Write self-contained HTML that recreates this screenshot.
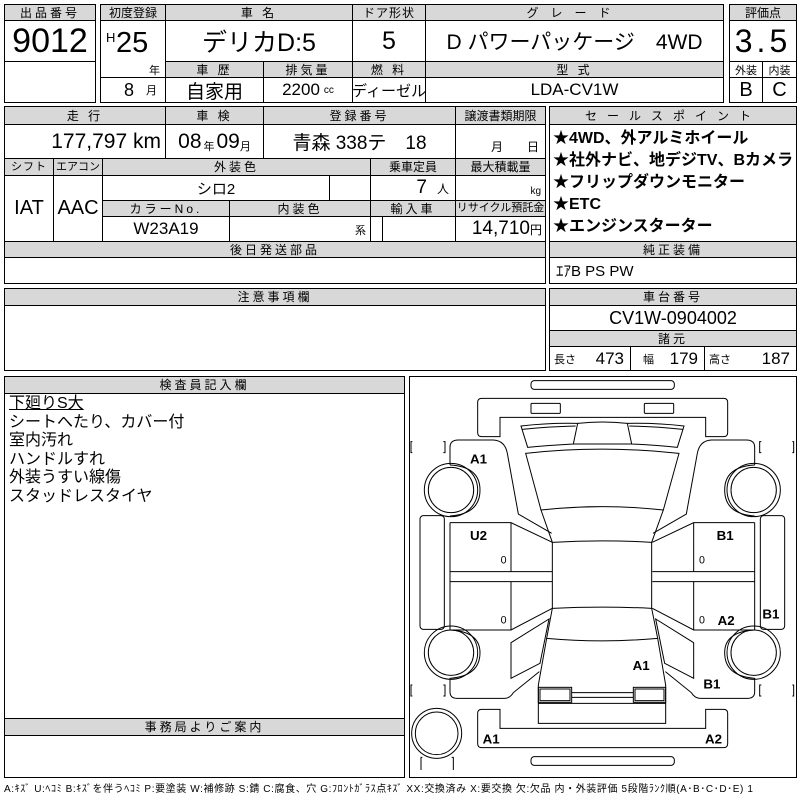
<!DOCTYPE html>
<html><head><meta charset="utf-8">
<style>
*{margin:0;padding:0;box-sizing:border-box}
body{width:800px;height:800px;background:#fff;position:relative;overflow:hidden;font-family:"Liberation Sans","Noto Sans CJK JP",sans-serif;color:#000}
.c{position:absolute;border:1px solid #000;display:flex;align-items:center;justify-content:center;white-space:nowrap;overflow:hidden}
.h{background:#d8d8d8;font-size:12px;letter-spacing:3px;line-height:1}
.v{font-size:19px}
.b{position:absolute;border:1px solid #000}
</style></head><body>
<div class="b" style="left:4px;top:4px;width:92px;height:99px"></div>
<div class="c h" style="left:4px;top:4px;width:92px;height:17px">出品番号</div>
<div class="c" style="left:4px;top:20px;width:92px;height:42px;font-size:34px">9012</div>

<div class="c h" style="left:100px;top:4px;width:66px;height:17px;letter-spacing:0">初度登録</div>
<div class="c h" style="left:165px;top:4px;width:188px;height:17px">車 名</div>
<div class="c h" style="left:352px;top:4px;width:74px;height:17px;letter-spacing:1px">ドア形状</div>
<div class="c h" style="left:425px;top:4px;width:299px;height:17px;letter-spacing:12px">グレード</div>
<div class="c" style="left:100px;top:20px;width:66px;height:58px"></div>
<div style="position:absolute;left:106px;top:30px;font-size:13px">H</div>
<div style="position:absolute;left:116px;top:29px;font-size:29px;line-height:1">25</div>
<div style="position:absolute;left:149px;top:62px;font-size:11px">年</div>
<div class="c" style="left:165px;top:20px;width:188px;height:42px;font-size:25px">デリカD:5</div>
<div class="c" style="left:352px;top:20px;width:74px;height:42px;font-size:25px">5</div>
<div class="c" style="left:425px;top:20px;width:299px;height:42px;font-size:21px">D パワーパッケージ　4WD</div>
<div class="c h" style="left:165px;top:61px;width:99px;height:17px">車 歴</div>
<div class="c h" style="left:263px;top:61px;width:90px;height:17px">排気量</div>
<div class="c h" style="left:352px;top:61px;width:74px;height:17px">燃 料</div>
<div class="c h" style="left:425px;top:61px;width:299px;height:17px">型 式</div>
<div class="c" style="left:100px;top:77px;width:66px;height:26px;font-size:18px;justify-content:flex-end;padding-right:8px">8 <span style="font-size:11px;margin-left:12px">月</span></div>
<div class="c v" style="left:165px;top:77px;width:99px;height:26px">自家用</div>
<div class="c v" style="left:263px;top:77px;width:90px;height:26px;font-size:17px">2200 <span style="font-size:10px;margin-left:4px">cc</span></div>
<div class="c v" style="left:352px;top:77px;width:74px;height:26px;font-size:15px">ディーゼル</div>
<div class="c v" style="left:425px;top:77px;width:299px;height:26px;font-size:17px">LDA-CV1W</div>

<div class="c h" style="left:729px;top:4px;width:68px;height:17px;letter-spacing:0">評価点</div>
<div class="c" style="left:729px;top:20px;width:68px;height:42px;font-size:32px;letter-spacing:4px">3.5</div>
<div class="c" style="left:729px;top:61px;width:34px;height:17px;font-size:11px">外装</div>
<div class="c" style="left:762px;top:61px;width:35px;height:17px;font-size:11px">内装</div>
<div class="c" style="left:729px;top:77px;width:34px;height:26px;font-size:20px">B</div>
<div class="c" style="left:762px;top:77px;width:35px;height:26px;font-size:20px">C</div>

<div class="c h" style="left:4px;top:106px;width:162px;height:19px">走 行</div>
<div class="c h" style="left:165px;top:106px;width:99px;height:19px">車 検</div>
<div class="c h" style="left:263px;top:106px;width:193px;height:19px">登録番号</div>
<div class="c h" style="left:455px;top:106px;width:91px;height:19px;letter-spacing:0">譲渡書類期限</div>
<div class="c v" style="left:4px;top:124px;width:162px;height:35px;justify-content:flex-end;padding-right:4px;font-size:21px">177,797 km</div>
<div class="c v" style="left:165px;top:124px;width:99px;height:35px;font-size:21px">08<span style="font-size:11px;margin:8px 2px 0">年</span>09<span style="font-size:11px;margin-top:8px">月</span></div>
<div class="c v" style="left:263px;top:124px;width:193px;height:35px">青森 338テ　18</div>
<div class="c" style="left:455px;top:124px;width:91px;height:35px;font-size:12px;align-items:flex-end;padding-bottom:3px;justify-content:flex-end;padding-right:6px">月　　日</div>
<div class="c h" style="left:4px;top:158px;width:50px;height:18px;letter-spacing:1px;font-size:11px">シフト</div>
<div class="c h" style="left:53px;top:158px;width:50px;height:18px;letter-spacing:0;font-size:11px">エアコン</div>
<div class="c h" style="left:102px;top:158px;width:269px;height:18px">外装色</div>
<div class="c h" style="left:370px;top:158px;width:86px;height:18px;letter-spacing:0">乗車定員</div>
<div class="c h" style="left:455px;top:158px;width:91px;height:18px;letter-spacing:0">最大積載量</div>
<div class="c v" style="left:4px;top:175px;width:50px;height:67px;font-size:20px">IAT</div>
<div class="c v" style="left:53px;top:175px;width:50px;height:67px;font-size:20px">AAC</div>
<div class="c" style="left:102px;top:175px;width:228px;height:26px;font-size:15px">シロ2</div>
<div class="c" style="left:329px;top:175px;width:42px;height:26px"></div>
<div class="c v" style="left:370px;top:175px;width:86px;height:26px;justify-content:flex-end;padding-right:6px">7 <span style="font-size:12px;margin-left:10px">人</span></div>
<div class="c" style="left:455px;top:175px;width:91px;height:26px;font-size:10px;justify-content:flex-end;align-items:flex-end;padding:0 4px 3px 0">kg</div>
<div class="c h" style="left:102px;top:200px;width:128px;height:17px">カラーNo.</div>
<div class="c h" style="left:229px;top:200px;width:142px;height:17px">内装色</div>
<div class="c h" style="left:370px;top:200px;width:86px;height:17px">輸入車</div>
<div class="c h" style="left:455px;top:200px;width:91px;height:17px;letter-spacing:0;font-size:11px">リサイクル預託金</div>
<div class="c" style="left:102px;top:216px;width:128px;height:26px;font-size:17px">W23A19</div>
<div class="c" style="left:229px;top:216px;width:142px;height:26px;font-size:11px;justify-content:flex-end;align-items:flex-end;padding:0 4px 3px 0">系</div>
<div class="c" style="left:370px;top:216px;width:13px;height:26px"></div>
<div class="c" style="left:382px;top:216px;width:74px;height:26px"></div>
<div class="c" style="left:455px;top:216px;width:91px;height:26px;font-size:19px;justify-content:flex-end;padding-right:3px">14,710<span style="font-size:12px">円</span></div>
<div class="c h" style="left:4px;top:241px;width:542px;height:17px">後日発送部品</div>
<div class="c" style="left:4px;top:257px;width:542px;height:27px"></div>

<div class="c h" style="left:549px;top:106px;width:248px;height:19px;letter-spacing:10px">セールスポイント</div>
<div class="c" style="left:549px;top:124px;width:248px;height:118px;display:block;font-size:16px;font-weight:bold;line-height:22px;padding:3px 0 0 3px">★4WD、外アルミホイール<br>★社外ナビ、地デジTV、Bカメラ<br>★フリップダウンモニター<br>★ETC<br>★エンジンスターター</div>
<div class="c h" style="left:549px;top:241px;width:248px;height:17px">純正装備</div>
<div class="c" style="left:549px;top:257px;width:248px;height:27px;justify-content:flex-start;padding-left:6px;font-size:15px">ｴｱB PS PW</div>

<div class="b" style="left:4px;top:288px;width:542px;height:83px"></div>
<div class="c h" style="left:4px;top:288px;width:542px;height:18px">注意事項欄</div>
<div class="c h" style="left:549px;top:288px;width:248px;height:18px">車台番号</div>
<div class="c" style="left:549px;top:305px;width:248px;height:26px;font-size:18px">CV1W-0904002</div>
<div class="c h" style="left:549px;top:330px;width:248px;height:17px">諸元</div>
<div class="c" style="left:549px;top:346px;width:82px;height:25px;font-size:17px;justify-content:space-between;padding:0 6px 0 4px"><span style="font-size:11px">長さ</span>473</div>
<div class="c" style="left:630px;top:346px;width:75px;height:25px;font-size:17px;justify-content:space-between;padding:0 6px 0 12px"><span style="font-size:11px">幅</span>179</div>
<div class="c" style="left:704px;top:346px;width:93px;height:25px;font-size:17px;justify-content:space-between;padding:0 6px 0 4px"><span style="font-size:11px">高さ</span>187</div>

<div class="b" style="left:4px;top:376px;width:401px;height:402px"></div>
<div class="c h" style="left:4px;top:376px;width:401px;height:18px">検査員記入欄</div>
<div style="position:absolute;left:9px;top:395px;font-size:16px;line-height:18.5px"><span style="text-decoration:underline">下廻りS大</span><br>シートへたり、カバー付<br>室内汚れ<br>ハンドルすれ<br>外装うすい線傷<br>スタッドレスタイヤ</div>
<div class="c h" style="left:4px;top:718px;width:401px;height:18px">事務局よりご案内</div>

<div class="b" style="left:409px;top:376px;width:388px;height:402px"></div>
<svg style="position:absolute;left:405px;top:370px" width="395" height="400" viewBox="0 0 1185 1200" fill="none" stroke="#000" stroke-width="3">
<g id="half">
<rect x="378" y="32" width="430" height="26" rx="10"/>
<path d="M285,200 L230,200 Q218,200 218,188 L218,97 Q218,85 230,85 L956,85 Q968,85 968,97 L968,188 Q968,200 956,200 L902,200 L902,142 L285,142 Z"/>
<rect x="378" y="100" width="88" height="30" rx="3"/>
<rect x="718" y="100" width="88" height="30" rx="3"/>
<path d="M348,168 Q430,158 518,160 L505,222 Q430,226 368,232 Z"/>
<path d="M352,178 Q430,170 512,168"/>
<path d="M837,168 Q755,158 667,160 L680,222 Q755,226 817,232 Z"/>
<path d="M833,178 Q755,170 673,168"/>
<path d="M505,222 L680,222"/>
<path d="M518,160 Q592,152 667,160"/>
<path d="M362,250 Q592,225 822,250 L775,420 Q592,400 408,420 Z"/>
<path d="M408,420 L442,517 Q592,508 740,517 L775,420"/>
<path d="M442,517 L442,715 Q592,708 740,715 L740,517"/>
<path d="M442,715 L425,805 Q592,820 758,805 L740,715"/>
<path d="M425,805 L400,945 L400,1060 L782,1060 L782,945 L758,805"/>
<rect x="400" y="952" width="100" height="45"/><rect x="405" y="957" width="90" height="35"/>
<rect x="685" y="952" width="97" height="45"/><rect x="690" y="957" width="87" height="35"/>
<path d="M500,968 L685,968 M500,982 L685,982 M400,1000 L782,1000"/>
<path d="M285,1018 L230,1018 Q218,1018 218,1030 L218,1121 Q218,1133 230,1133 L956,1133 Q968,1133 968,1121 L968,1030 Q968,1018 956,1018 L902,1018 L902,1075 L285,1075 Z"/>
<rect x="378" y="1160" width="430" height="26" rx="10"/>
<g id="side">
<path d="M135,285 L135,232 Q135,210 160,210 L265,210 Q300,212 307,250 L340,432 L440,490"/>
<path d="M135,285 Q225,290 225,360 Q225,432 135,438"/>
<circle cx="138" cy="360" r="80"/><circle cx="138" cy="360" r="68"/>
<rect x="45" y="437" width="73" height="341" rx="10"/>
<path d="M135,458 L318,458 L442,517 M135,458 L135,780 L318,780 L442,715 M318,458 L318,605 M318,635 L318,780 M135,605 L442,605 M135,635 L442,635"/>
<path d="M135,780 Q225,785 225,848 Q225,918 135,925 L135,965 Q135,985 155,985 L298,985 Q315,985 325,968 L403,905"/>
<circle cx="138" cy="848" r="80"/><circle cx="138" cy="848" r="68"/>
<path d="M318,818 L432,747 L405,880 L318,925 Z"/>
<path d="M22,215 L18,215 L18,248 L22,248 M115,215 L120,215 L120,248 L115,248"/>
<path d="M22,945 L18,945 L18,978 L22,978 M115,945 L120,945 L120,978 L115,978"/>
</g>
<use href="#side" transform="translate(1184,0) scale(-1,1)"/>
</g>
<circle cx="95" cy="1090" r="75"/><circle cx="95" cy="1090" r="64"/>
<path d="M52,1162 L48,1162 L48,1200 M140,1162 L145,1162 L145,1200"/>
<g fill="#000" stroke="none" font-family="Liberation Sans, sans-serif" font-size="40" font-weight="bold">
<text x="195" y="280">A1</text><text x="195" y="510">U2</text>
<text x="935" y="510">B1</text><text x="938" y="765">A2</text>
<text x="1072" y="745">B1</text><text x="683" y="900">A1</text>
<text x="895" y="955">B1</text><text x="233" y="1120">A1</text>
<text x="900" y="1120">A2</text>
<text x="287" y="580" font-size="32" font-weight="normal">0</text><text x="287" y="760" font-size="32" font-weight="normal">0</text>
<text x="882" y="580" font-size="32" font-weight="normal">0</text><text x="882" y="760" font-size="32" font-weight="normal">0</text>
</g>
</svg>
<div style="position:absolute;left:4px;top:780px;font-size:10px;white-space:nowrap;letter-spacing:0.6px">A:ｷｽﾞ U:ﾍｺﾐ B:ｷｽﾞを伴うﾍｺﾐ P:要塗装 W:補修跡 S:錆 C:腐食、穴 G:ﾌﾛﾝﾄｶﾞﾗｽ点ｷｽﾞ XX:交換済み X:要交換 欠:欠品 内・外装評価 5段階ﾗﾝｸ順(A･B･C･D･E) 1</div>
</body></html>
